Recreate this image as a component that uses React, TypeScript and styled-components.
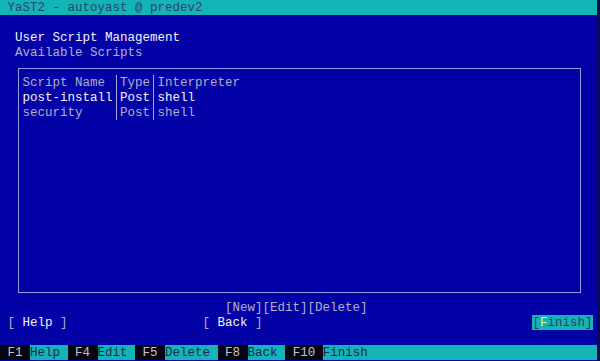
import React from 'react'
import styled, { createGlobalStyle } from 'styled-components'

const GlobalStyle = createGlobalStyle`
    html, body {
        margin: 0;
        padding: 0;
        background: #06063a;
    }
`

const Screen = styled.div`
    width: 597px;
    height: 361px;
    border-right: 3px solid #0a0a4a;
    background-color: #0202a6;
    font-family: "Liberation Mono", "Courier New", monospace;
    font-size: 12.5px;
    line-height: 17px;
    color: #b4b4c8;
    display: flex;
    flex-direction: column;
    white-space: pre;
    overflow: hidden;
`

const TitleBar = styled.div`
    height: 15px;
    background-color: #14b4b6;
    color: #2c4470;
    padding-left: 1ch;
`

const Row = styled.div<{ $top?: number }>`
    height: 15px;
    display: flex;
    margin-top: ${(p) => p.$top || 0}px;
`

const Text = styled.span<{ $col?: number; $bright?: boolean }>`
    margin-left: ${(p) => p.$col || 0}ch;
    color: ${(p) => (p.$bright ? '#f4f4f8' : '#b0b0c8')};
`

const Frame = styled.div`
    margin: 8px 0 7px 18px;
    width: 557.5px;
    height: 210px;
    border: 1px solid #9c9ce6;
    padding: 6px 0 7px 3.5px;
    box-sizing: content-box;
`

const Cell = styled.span<{ $w: number; $bright?: boolean }>`
    width: ${(p) => p.$w}ch;
    color: ${(p) => (p.$bright ? '#f4f4f8' : '#b0b0c8')};
`

const Sep = styled.span`
    width: 1ch;
    height: 15px;
    background: linear-gradient(to right, transparent calc(50% - 1px), #a8a8d0 calc(50% - 1px), #a8a8d0 50%, transparent 50%);
`

const Spacer = styled.div`
    flex: 1;
`

const Button = styled.span<{ $col?: number }>`
    margin-left: ${(p) => p.$col || 0}ch;
    color: #b0b0c8;
    b {
        font-weight: normal;
        color: #f4f4f8;
    }
`

const FocusButton = styled.span`
    height: 15px;
    margin-right: 4.5px;
    background-color: #14b4b6;
    color: #2a3a5e;
    em {
        font-style: normal;
        color: #eef27a;
    }
`

const KeyBar = styled.div`
    height: 15px;
    display: flex;
    background-color: #14b4b6;
    margin-top: 15px;
`

const Key = styled.span`
    background-color: #060612;
    color: #c4c4c4;
`

const KeyLabel = styled.span`
    color: #1a2a50;
`

const scripts = [
    { name: 'post-install', type: 'Post', interp: 'shell', active: true },
    { name: 'security', type: 'Post', interp: 'shell', active: false },
]

const keys = [
    { key: ' F1 ', label: 'Help ' },
    { key: ' F4 ', label: 'Edit ' },
    { key: ' F5 ', label: 'Delete ' },
    { key: ' F8 ', label: 'Back ' },
    { key: ' F10 ', label: 'Finish' },
]

export default function App() {
    return (
        <>
            <GlobalStyle />
            <Screen>
                <TitleBar>YaST2 - autoyast @ predev2</TitleBar>
                <Row $top={15}>
                    <Text $col={2} $bright>User Script Management</Text>
                </Row>
                <Row>
                    <Text $col={2}>Available Scripts</Text>
                </Row>
                <Frame>
                    <Row>
                        <Cell $w={12}>Script Name</Cell>
                        <Sep />
                        <Cell $w={4}>Type</Cell>
                        <Sep />
                        <Cell $w={12}>Interpreter</Cell>
                    </Row>
                    {scripts.map((s) => (
                        <Row key={s.name}>
                            <Cell $w={12} $bright={s.active}>{s.name}</Cell>
                            <Sep />
                            <Cell $w={4} $bright={s.active}>{s.type}</Cell>
                            <Sep />
                            <Cell $w={12} $bright={s.active}>{s.interp}</Cell>
                        </Row>
                    ))}
                </Frame>
                <Row>
                    <Button $col={30}>[New][Edit][Delete]</Button>
                </Row>
                <Row>
                    <Button $col={1}>[ <b>Help</b> ]</Button>
                    <Button $col={18}>[ <b>Back</b> ]</Button>
                    <Spacer />
                    <FocusButton>[<em>F</em>inish]</FocusButton>
                </Row>
                <KeyBar>
                    {keys.map((k) => (
                        <React.Fragment key={k.key}>
                            <Key>{k.key}</Key>
                            <KeyLabel>{k.label}</KeyLabel>
                        </React.Fragment>
                    ))}
                </KeyBar>
            </Screen>
        </>
    )
}
